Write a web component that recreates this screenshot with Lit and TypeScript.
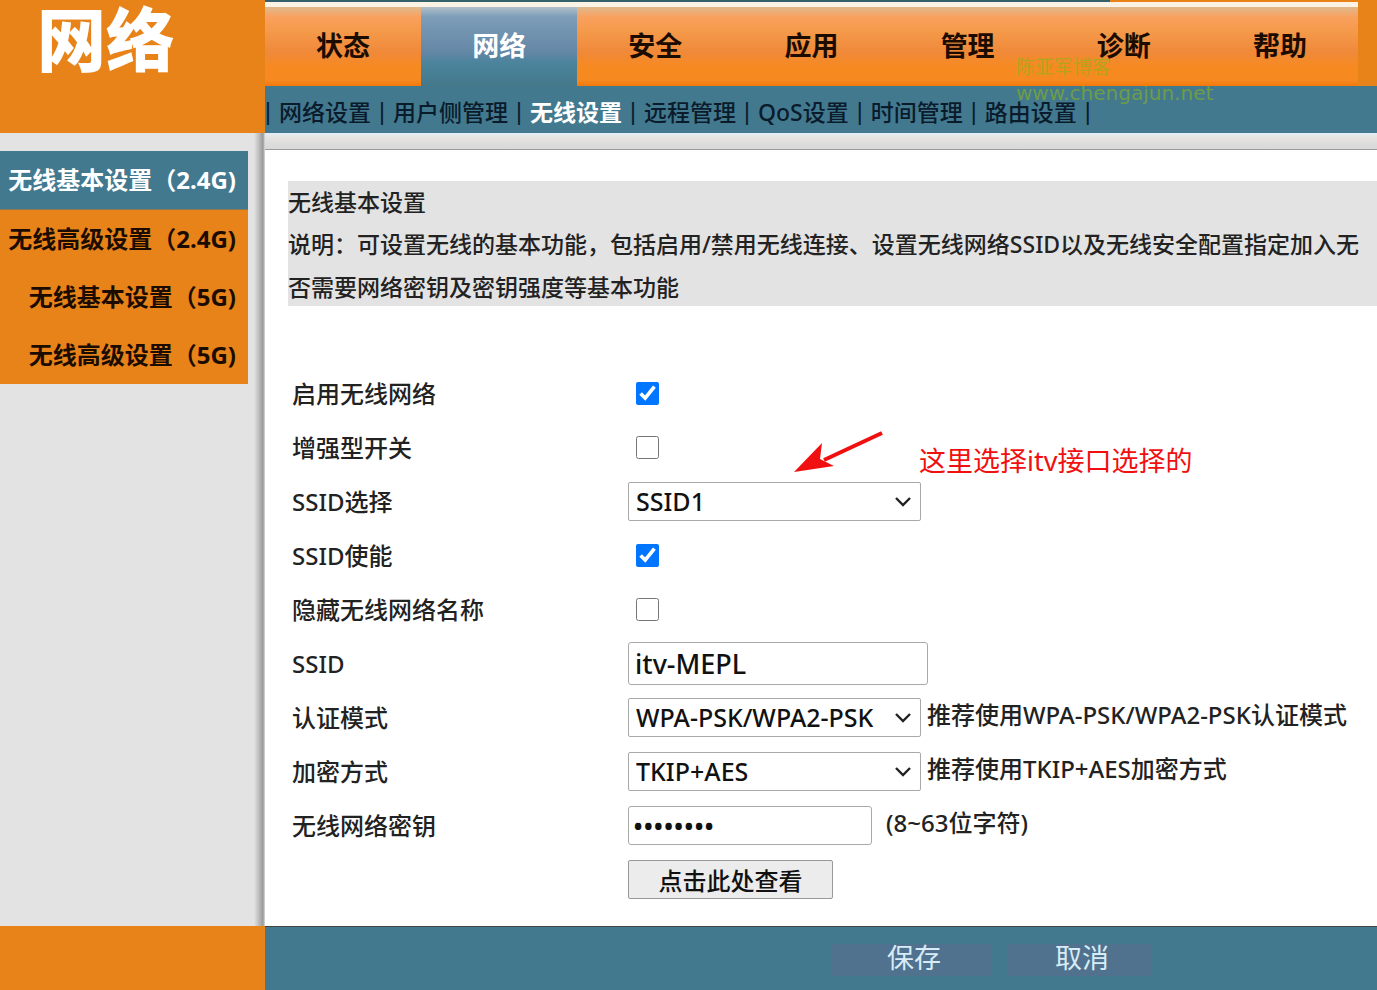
import { LitElement, html, css, nothing } from "lit";
import { customElement, state } from "lit/decorators.js";
import { classMap } from "lit/directives/class-map.js";

const TABS = ["状态", "网络", "安全", "应用", "管理", "诊断", "帮助"];
const SUBTABS = ["网络设置", "用户侧管理", "无线设置", "远程管理", "QoS设置", "时间管理", "路由设置"];
const MENU = ["无线基本设置（2.4G)", "无线高级设置（2.4G)", "无线基本设置（5G)", "无线高级设置（5G)"];

@customElement("router-select")
class RouterSelect extends LitElement {
  static properties = { options: { type: Array }, label: { type: String } };
  declare options: string[];
  declare label: string;

  static styles = css`
    :host { display: block; position: relative; width: 293px; flex: none; }
    select {
      appearance: none;
      box-sizing: border-box;
      width: 100%;
      height: 39px;
      margin: 0;
      padding: 0 36px 0 7px;
      border: 1px solid #a9a9a9;
      border-radius: 2px;
      background: #fff;
      color: #111;
      font: 500 25px "Noto Sans", "Noto Sans CJK SC", sans-serif;
    }
    svg { position: absolute; right: 9px; top: 13px; width: 18px; height: 13px; pointer-events: none; }
  `;

  render() {
    return html`
      <select aria-label=${this.label}>
        ${this.options.map((o) => html`<option>${o}</option>`)}
      </select>
      <svg viewBox="0 0 18 13" fill="none" stroke="#222" stroke-width="2.4"><path d="M2 3 L9 10 L16 3" /></svg>
    `;
  }
}

@customElement("app-root")
class AppRoot extends LitElement {
  @state() tab = 1;
  @state() subtab = 2;
  @state() item = 0;

  static styles = css`
    :host {
      display: grid;
      grid-template-columns: 265px minmax(0, 1fr);
      grid-template-rows: 133px 1fr 64px;
      min-height: 100vh;
      background: #fff;
      color: #222;
      font: 23px/32px "Noto Sans", "Noto Sans CJK SC", sans-serif;
    }
    a { color: inherit; text-decoration: none; }
    .title {
      margin: 0;
      padding-left: 37px;
      background: #e78318;
      color: #fff;
      font-size: 69px;
      line-height: 78px;
      font-weight: 900;
    }
    .top { position: relative; display: flex; flex-direction: column; background: #43798f; }
    .tabs {
      display: flex;
      height: 86px;
      box-sizing: border-box;
      padding: 2px 19px 0 0;
      background: linear-gradient(90deg, #35616c 76%, #e78318 76%) 0 0 / 100% 2px no-repeat, #e78318;
    }
    .tab {
      flex: 1;
      text-align: center;
      font-size: 27px;
      line-height: 78px;
      font-weight: 700;
      color: #1c0c00;
      border-top: 5px solid #fdf3e4;
      background: linear-gradient(#dfb98c 0, #f9a05f 10px, #f49a4a 24px, #f0893a 45px, #f68a20 60px, #f68a20 73px, #f4780c 79px);
    }
    .tab.on {
      color: #fff;
      background: linear-gradient(#b0bfca 0, #7d9db8 10px, #6487a6 45px, #4a849c 56px, #43798a 79px);
    }
    .subtabs { display: flex; height: 47px; align-items: center; color: #0a1c2c; white-space: pre; font-weight: 500; padding-top: 4px; box-sizing: border-box; }
    .subtabs a.on { color: #fff; font-weight: 700; }
    .bar { padding: 0 8px; font-family: "Liberation Sans", sans-serif; font-weight: 400; }
    .bar:first-child { padding-left: 0; }
    .watermark { position: absolute; left: 751px; top: 54px; color: rgba(140, 180, 20, 0.6); font-size: 19px; line-height: 26px; }
    .url { font-family: "DejaVu Sans", sans-serif; font-size: 20px; }
    .side {
      box-sizing: border-box;
      padding: 18px 17px 0 0;
      background: linear-gradient(90deg, transparent 254px, #c4c4c4 258px, #999 263px, #ddd 265px), #e3e3e3;
    }
    .menu { display: flex; flex-direction: column; background: #e78318; color: #1c0c00; font-size: 24px; font-weight: 700; }
    .menu a { box-sizing: border-box; padding-right: 12px; text-align: right; line-height: 58px; white-space: nowrap; }
    .menu a.on { background: #43798f; color: #fff; border-bottom: 1px solid #8c7a55; }
    .main { display: flex; flex-direction: column; min-width: 0; }
    .strip { height: 17px; box-sizing: border-box; background: linear-gradient(#e3eef6 0, #e5e2e1 5px, #dadada 14px); border-bottom: 1px solid #999; }
    .desc { margin: 31px 0 0 23px; padding-bottom: 1px; background: #e3e3e3; white-space: nowrap; overflow: hidden; font-weight: 500; }
    .desc h2, .desc p { margin: 0; font: inherit; line-height: 43px; }
    .desc h2 { line-height: 42px; }
    .desc p { line-height: 43px; margin-bottom: -4px; }
    .form { margin: 60px 0 0 27px; font-size: 24px; }
    .row { position: relative; display: grid; grid-template-columns: 336px minmax(0, 1fr); align-items: center; height: 54px; font-weight: 500; }
    .name { padding-top: 2px; }
    .field { display: flex; align-items: center; white-space: nowrap; }
    .field input[type="checkbox"] { width: 23px; height: 23px; margin: 0 0 0 8px; accent-color: #0075ff; }
    .text {
      box-sizing: border-box;
      height: 43px;
      width: 300px;
      margin: 0;
      padding: 0 6px;
      border: 1px solid #a9a9a9;
      border-radius: 3px;
      color: #111;
      font: 500 27px "Noto Sans", "Noto Sans CJK SC", sans-serif;
    }
    .pwd { width: 244px; height: 39px; padding: 0 4px; }
    .hint { margin-left: 6px; padding-bottom: 4px; }
    .hint.wide { margin-left: 14px; }
    .view {
      width: 205px;
      height: 39px;
      padding: 0;
      border: 1px solid #999;
      border-radius: 2px;
      background: #ececec;
      color: #111;
      font: 500 24px "Noto Sans", "Noto Sans CJK SC", sans-serif;
    }
    .arrow { position: absolute; left: 502px; top: 9px; width: 90px; height: 44px; }
    .note { position: absolute; left: 627px; top: 24px; color: #f01010; font-size: 27px; line-height: 34px; font-weight: 400; white-space: nowrap; }
    .foot-side { background: #e78318; }
    .foot { display: flex; gap: 16px; align-items: flex-start; padding: 17px 0 0 567px; background: #43798f; border-top: 1px solid #444; }
    .foot button {
      width: 160px;
      height: 32px;
      padding: 0 0 4px 4px;
      border: 0;
      background: #50728f;
      color: #d7ecf6;
      font: 27px/28px "Noto Sans", "Noto Sans CJK SC", sans-serif;
    }
    .foot button + button { width: 144px; }
  `;

  check(id: string, label: string, checked: boolean, extra: unknown = nothing) {
    return html`<div class="row">
      <label class="name" for=${id}>${label}</label>
      <div class="field"><input type="checkbox" id=${id} .checked=${checked} /></div>
      ${extra}
    </div>`;
  }

  pick(label: string, options: string[], hint = "") {
    return html`<div class="row">
      <span class="name">${label}</span>
      <div class="field">
        <router-select .options=${options} .label=${label}></router-select>
        ${hint ? html`<span class="hint">${hint}</span>` : nothing}
      </div>
    </div>`;
  }

  render() {
    const go = (fn: () => void) => (e: Event) => { e.preventDefault(); fn(); };
    return html`
      <h1 class="title">网络</h1>
      <header class="top">
        <nav class="tabs">
          ${TABS.map((t, i) => html`<a href="#" class=${classMap({ tab: true, on: i === this.tab })} @click=${go(() => (this.tab = i))}>${t}</a>`)}
        </nav>
        <nav class="subtabs"><span class="bar">|</span>${SUBTABS.map(
          (t, i) => html`<a href="#" class=${classMap({ on: i === this.subtab })} @click=${go(() => (this.subtab = i))}>${t}</a><span class="bar">|</span>`
        )}</nav>
        <div class="watermark">陈亚军博客<br /><span class="url">www.chengajun.net</span></div>
      </header>
      <aside class="side">
        <nav class="menu">
          ${MENU.map((t, i) => html`<a href="#" class=${classMap({ on: i === this.item })} @click=${go(() => (this.item = i))}>${t}</a>`)}
        </nav>
      </aside>
      <main class="main">
        <div class="strip"></div>
        <section class="desc">
          <h2>无线基本设置</h2>
          <p>说明：可设置无线的基本功能，包括启用/禁用无线连接、设置无线网络SSID以及无线安全配置指定加入无<br />否需要网络密钥及密钥强度等基本功能</p>
        </section>
        <form class="form" @submit=${(e: Event) => e.preventDefault()}>
          ${this.check("enable", "启用无线网络", true)}
          ${this.check("boost", "增强型开关", false, html`
            <svg class="arrow" viewBox="0 0 90 44"><path d="M88 4 L30 31" stroke="#f01010" stroke-width="4" /><path d="M0 43 L28 14 L26 30 L40 37 Z" fill="#f01010" /></svg>
            <span class="note">这里选择itv接口选择的</span>`)}
          ${this.pick("SSID选择", ["SSID1"])}
          ${this.check("ssid-on", "SSID使能", true)}
          ${this.check("hide", "隐藏无线网络名称", false)}
          <div class="row"><label class="name" for="ssid">SSID</label><div class="field"><input class="text" id="ssid" type="text" value="itv-MEPL" /></div></div>
          ${this.pick("认证模式", ["WPA-PSK/WPA2-PSK"], "推荐使用WPA-PSK/WPA2-PSK认证模式")}
          ${this.pick("加密方式", ["TKIP+AES"], "推荐使用TKIP+AES加密方式")}
          <div class="row"><label class="name" for="pwd">无线网络密钥</label><div class="field"><input class="text pwd" id="pwd" type="password" value="12345678" /><span class="hint wide">(8~63位字符)</span></div></div>
          <div class="row"><span></span><div class="field"><button class="view" type="button">点击此处查看</button></div></div>
        </form>
      </main>
      <div class="foot-side"></div>
      <footer class="foot"><button type="button">保存</button><button type="button">取消</button></footer>
    `;
  }
}
